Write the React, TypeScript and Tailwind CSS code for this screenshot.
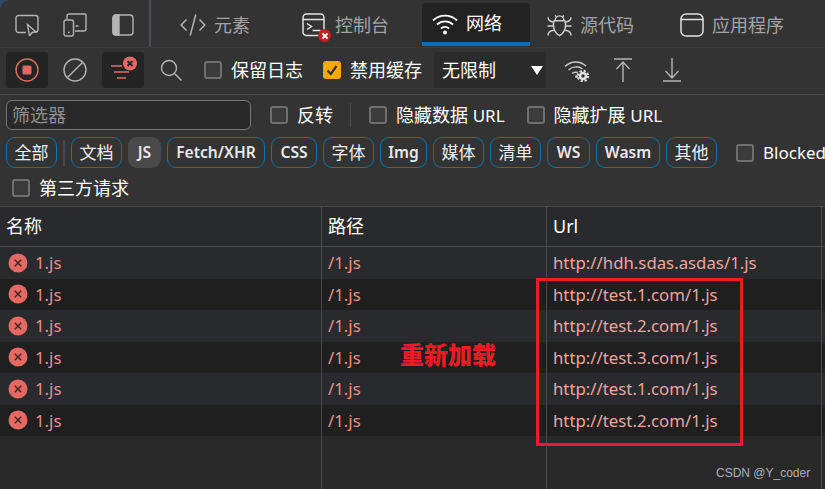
import type { ReactNode } from "react";

const latin = "font-['Noto_Sans','Noto_Sans_CJK_SC',sans-serif]";

const Check = ({ on = false }: { on?: boolean }) =>
  on ? (
    <span className="flex h-[18px] w-[18px] shrink-0 items-center justify-center rounded-[3px] bg-[#fbaa04]">
      <svg viewBox="0 0 18 18" className="h-[18px] w-[18px]" fill="none" stroke="#333" strokeWidth="2.2">
        <path d="M4.5 9.5 7.8 13l5.7-8" />
      </svg>
    </span>
  ) : (
    <span className="h-[18px] w-[18px] shrink-0 rounded-[3px] border-2 border-[#6f6f6f] bg-[#3b3b3b]" />
  );

const Opt = ({ label, on, className = "" }: { label: ReactNode; on?: boolean; className?: string }) => (
  <label className={`flex shrink-0 items-center gap-[9px] whitespace-nowrap text-[18px] text-white ${className}`}>
    <Check on={on} />
    <span>{label}</span>
  </label>
);

const ErrorDot = () => (
  <svg viewBox="0 0 20 20" className="h-5 w-5 shrink-0">
    <circle cx="10" cy="10" r="9.5" fill="#e46962" />
    <path d="M6.8 6.8l6.4 6.4M13.2 6.8l-6.4 6.4" stroke="#3a2322" strokeWidth="1.4" />
  </svg>
);

const tabs = [
  {
    name: "元素",
    w: "w-[121px] pl-[29px]",
    icon: (
      <svg viewBox="0 0 26 24" className="h-6 w-[26px]" fill="none" stroke="#b4b4b4" strokeWidth="1.5">
        <path d="M6.5 6.5 1.2 12l5.3 5.5M19.5 6.5l5.3 5.5-5.3 5.5M15.8 1.5 10.2 22.5" />
      </svg>
    ),
  },
  {
    name: "控制台",
    w: "w-[150px] pl-[30px]",
    icon: (
      <span className="relative block h-[24px] w-[25px]">
        <svg viewBox="0 0 25 24" className="h-6 w-[25px]" fill="none" stroke="#e2e2e2" strokeWidth="1.5">
          <rect x="1" y="1" width="21" height="21.5" rx="3.5" />
          <path d="M1 6.5h21M5 10.5l4.5 3-4.500 3M10.5 17.5h8" />
        </svg>
        <span className="absolute left-[16px] top-[16px] flex h-[13px] w-[13px] items-center justify-center rounded-full bg-[#c5221f]">
          <svg viewBox="0 0 8 8" className="h-[8px] w-[8px]" stroke="#fff" strokeWidth="1.8">
            <path d="M1.5 1.5l5 5M6.5 1.5l-5 5" />
          </svg>
        </span>
      </span>
    ),
  },
  {
    name: "网络",
    active: true,
    w: "w-[108px] pl-[10px]",
    icon: (
      <svg viewBox="0 0 26 22" className="h-[22px] w-[26px]" fill="none" stroke="#fff" strokeWidth="1.8">
        <path d="M1 7.500c6.500-6.500 17.500-6.500 24 0M5 11.500c4.500-4.300 11.500-4.300 16 0M9 15.500c2.300-2 5.700-2 8 0" />
        <circle cx="13" cy="19.500" r="2" fill="#fff" stroke="none" />
      </svg>
    ),
  },
  {
    name: "源代码",
    w: "w-[133px] pl-[17px]",
    icon: (
      <svg viewBox="0 0 26 26" className="h-[26px] w-[25px]" fill="none" stroke="#d0d0d0" strokeWidth="1.5">
        <path d="M8.500 8.500c0-3 2-5 4.500-5s4.500 2 4.500 5zM7.500 8.500h11c1.500 3 1.500 12-5.500 15.500-7-3.500-7-12.500-5.500-15.500zM8.500 3 10 5M17.500 3 16 5M1 5c0 3 2 4.500 6 5M25 5c0 3-2 4.500-6 5M0.500 14H6.500M25.500 14H19.500M1 24c0-3 2-5 6-5.500M25 24c0-3-2-5-6-5.500" />
      </svg>
    ),
  },
  {
    name: "应用程序",
    w: "w-[135px] pl-[17px]",
    icon: (
      <svg viewBox="0 0 24 24" className="h-6 w-6" fill="none" stroke="#e2e2e2" strokeWidth="1.5">
        <rect x="1" y="1" width="22" height="22" rx="5" />
        <path d="M1 6.500h22" />
      </svg>
    ),
  },
];

const chips = [
  { t: "全部", w: "w-[51px]" },
  { sep: true, t: "|", w: "" },
  { t: "文档", w: "w-[51px]" },
  { t: "JS", w: "w-[33px]", on: true, b: true },
  { t: "Fetch/XHR", w: "w-[98px]", b: true },
  { t: "CSS", w: "w-[46px]", b: true },
  { t: "字体", w: "w-[51px]" },
  { t: "Img", w: "w-[47px]", b: true },
  { t: "媒体", w: "w-[51px]" },
  { t: "清单", w: "w-[51px]" },
  { t: "WS", w: "w-[43px]", b: true },
  { t: "Wasm", w: "w-[64px]", b: true },
  { t: "其他", w: "w-[51px]" },
];

const rows = [
  "http://hdh.sdas.asdas/1.js",
  "http://test.1.com/1.js",
  "http://test.2.com/1.js",
  "http://test.3.com/1.js",
  "http://test.1.com/1.js",
  "http://test.2.com/1.js",
];

const cols = "grid grid-cols-[322px_225px_275px_1fr]";
const cell = "flex items-center border-r border-[#4a4a4a] px-[6px] whitespace-nowrap";

export default function App() {
  return (
    <div className={`relative flex h-[489px] w-[825px] flex-col overflow-hidden bg-[#2f4a66] ${latin}`}>
      {/* tabs */}
      <div className="flex h-[47px] items-stretch overflow-hidden rounded-tl-[10px] bg-[#333333]">
        <div className="flex w-[149px] shrink-0 items-center pl-[15px] pt-[2px]">
          <svg viewBox="0 0 24 22" className="h-[22px] w-6" fill="none" stroke="#b4b4b4" strokeWidth="1.4">
            <path d="M11 18.500H3.500a2.500 2.500 0 0 1-2.500-2.500V4a2.500 2.500 0 0 1 2.500-2.500h17A2.500 2.500 0 0 1 23 4v12a2.500 2.500 0 0 1-2 2" />
            <path d="M12.500 10.500l8.500 7.500-4 .5-2.500 3.500z" />
          </svg>
          <svg viewBox="0 0 24 24" className="ml-[24px] h-6 w-6" fill="none" stroke="#b4b4b4" strokeWidth="1.4">
            <path d="M4 6.500V3a2 2 0 0 1 2-2h16a1.500 1.500 0 0 1 1 1.500v13.500a2 2 0 0 1-2 2h-9" />
            <rect x="1" y="7" width="9.500" height="16" rx="2" />
            <path d="M12.500 13h3M5 19.500h1.500" />
          </svg>
          <svg viewBox="0 0 22 22" className="ml-[25px] h-[22px] w-[22px]" fill="none" stroke="#b4b4b4" strokeWidth="1.4">
            <path d="M7 1H4a3 3 0 0 0-3 3v14a3 3 0 0 0 3 3h3z" fill="#b4b4b4" />
            <rect x="1" y="1" width="20" height="20" rx="3" />
          </svg>
        </div>
        <div className="h-full w-[2px] shrink-0 bg-[#46505a]" />
        {tabs.map((t) => (
          <div
            key={t.name}
            className={`flex shrink-0 items-center gap-[8px] ${t.w} ${
              t.active
                ? "mt-[3px] h-[43px] rounded-t-[4px] border-b-[4px] border-[#0a6ebd] bg-[#222222] pt-[2px] text-white"
                : "h-[47px] pt-[3px] text-[#a3a3a3]"
            } text-[18px] whitespace-nowrap`}
          >
            {t.icon}
            {t.name}
          </div>
        ))}
      </div>

      {/* toolbar */}
      <div className="flex h-[48px] items-center border-y border-y-[#3a3a3a] border-b-[#4a4a4a] bg-[#333333] pb-[2px] pl-[6px]">
        <div className="flex h-9 w-[42px] items-center justify-center rounded-[3px] bg-[#242424]">
          <svg viewBox="0 0 24 24" className="h-6 w-6" fill="none">
            <circle cx="12" cy="12" r="11" stroke="#e46962" strokeWidth="1.4" />
            <rect x="7.500" y="7.500" width="9" height="9" rx="1.5" fill="#e46962" />
          </svg>
        </div>
        <svg viewBox="0 0 24 24" className="ml-[15px] h-6 w-6" fill="none" stroke="#b4b4b4" strokeWidth="1.4">
          <circle cx="12" cy="12" r="11" />
          <path d="M4.500 19.500l15-15" />
        </svg>
        <div className="relative ml-[15px] h-9 w-[42px] rounded-[3px] bg-[#242424]">
          <svg viewBox="0 0 42 36" className="h-9 w-[42px]" fill="none">
            <path d="M9 14h11M12 20h15M15 26h9" stroke="#e46962" strokeWidth="1.4" />
            <circle cx="28" cy="11.500" r="7" fill="#e46962" />
            <path d="M25.500 9l5 5M30.500 9l-5 5" stroke="#222" strokeWidth="1.8" />
          </svg>
        </div>
        <svg viewBox="0 0 22 22" className="ml-[16px] h-[22px] w-[22px]" fill="none" stroke="#b4b4b4" strokeWidth="1.4">
          <circle cx="9" cy="9" r="7.500" />
          <path d="M14.500 14.500l7 7" />
        </svg>
        <Opt label="保留日志" className="ml-[22px]" />
        <Opt label="禁用缓存" on className="ml-[20px]" />
        <div className="ml-[12px] flex h-9 w-[112px] items-center justify-between rounded-[3px] bg-[#2b2b2b] pl-[8px] pr-[3px] text-[18px] text-white">
          无限制
          <svg viewBox="0 0 12 9" className="h-[9px] w-3">
            <path d="M0 0h12L6 9z" fill="#fff" />
          </svg>
        </div>
        <svg viewBox="0 0 27 24" className="ml-[18px] h-6 w-[27px]" fill="none" stroke="#c8c8c8" strokeWidth="1.5">
          <path d="M1 8.500c6-6 15-6 21-.5M4.500 12c4-4 10-4 14-1M8 15.500c2-1.500 4-1.500 6-1" />
          <circle cx="12.500" cy="18.500" r="1.500" fill="#c8c8c8" stroke="none" />
          <circle cx="19" cy="18" r="3" stroke="#e0e0e0" strokeWidth="2.6" />
          <circle cx="19" cy="18" r="5.200" stroke="#e0e0e0" strokeWidth="2" strokeDasharray="2.200 1.880" />
        </svg>
        <svg viewBox="0 0 18 24" className="ml-[23px] h-6 w-[18px]" fill="none" stroke="#b4b4b4" strokeWidth="1.4">
          <path d="M0 1h18M9 24V4M2.500 11 9 4l6.500 7" />
        </svg>
        <svg viewBox="0 0 18 24" className="ml-[31px] h-6 w-[18px]" fill="none" stroke="#b4b4b4" strokeWidth="1.4">
          <path d="M0 23h18M9 0v20M2.500 13 9 20l6.500-7" />
        </svg>
      </div>

      {/* filters */}
      <div className="flex h-[112px] flex-col border-b border-[#4a4a4a] bg-[#333333] px-[6px]">
        <div className="mt-[5px] flex h-[30px] items-center">
          <div className="flex h-[30px] w-[245px] shrink-0 items-center rounded-[6px] border border-[#777777] bg-[#292929] pl-[5px] text-[18px] text-[#8f8f8f]">
            筛选器
          </div>
          <Opt label="反转" className="ml-[19px]" />
          <div className="ml-[17px] h-6 w-px bg-[#4e4e4e]" />
          <Opt label={<>隐藏数据 <span className="text-[17px]">URL</span></>} className="ml-[18px]" />
          <Opt label={<>隐藏扩展 <span className="text-[17px]">URL</span></>} className="ml-[22px]" />
        </div>
        <div className="mt-[7px] flex h-[31px] items-center gap-[6px]">
          {chips.map((c, i) =>
            c.sep ? (
              <div key={i} className="h-[26px] w-[2px] shrink-0 bg-[#4a4a4a]" />
            ) : (
              <div
                key={i}
                className={`flex h-[31px] ${c.w} shrink-0 items-center justify-center rounded-[9px] ${
                  c.on ? "bg-[#4a4a4a]" : "border border-[#0b74a8]"
                } ${c.b ? "text-[15.6px] font-semibold text-[#e8e8e8]" : "text-[17px] text-[#eeeeee]"}`}
              >
                {c.t}
              </div>
            ),
          )}
          <Opt label={<span className="text-[17px]">Blocked</span>} className="ml-[13px]" />
        </div>
        <Opt label="第三方请求" className="ml-[6px] mt-[6px] h-[28px] self-start" />
      </div>

      {/* table */}
      <div className={`${cols} h-[40px] border-b border-[#4a4a4a] bg-[#292a2d] text-[18px] text-white`}>
        <div className={cell}>名称</div>
        <div className={cell}>路径</div>
        <div className={cell}>Url</div>
      </div>
      {rows.map((url, i) => (
        <div
          key={i}
          className={`${cols} h-[31.5px] text-[16.8px] text-[#ec8f87] ${i % 2 ? "bg-[#1f1f1f]" : "bg-[#292a2d]"}`}
        >
          <div className={`${cell} pl-[8px]`}>
            <ErrorDot />
            <span className="ml-[7px]">1.js</span>
          </div>
          <div className={cell}>/1.js</div>
          <div className={`${cell} text-[#eda59d]`}>{url}</div>
        </div>
      ))}
      <div className={`${cols} flex-1 bg-[#292929]`}>
        <div className={cell} />
        <div className={cell} />
        <div className={cell} />
      </div>

      {/* annotation drawn on top of the screenshot */}
      <div className="absolute left-[536px] top-[278px] h-[168px] w-[207px] border-[3px] border-[#ed1c24]" />
      <span className="absolute left-[400px] top-[340px] text-[24px] font-black leading-[30px] text-[#ed1c24]">重新加载</span>
      <span className="absolute left-[716px] top-[464px] font-['Liberation_Sans',sans-serif] text-[12px] text-[#b0b0b0]">
        CSDN @Y_coder
      </span>
    </div>
  );
}
